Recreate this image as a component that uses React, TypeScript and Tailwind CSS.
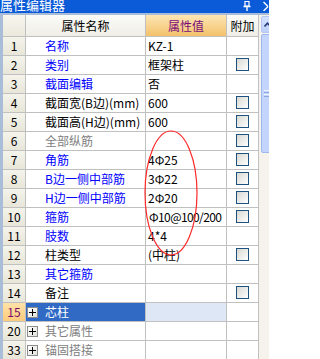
import React from "react";

type Row = { n: string; name: string; c: string; v: string; cb: boolean; tight?: boolean };

const rows: Row[] = [
  { n: "1", name: "名称", c: "text-[#0000ff]", v: "KZ-1", cb: false },
  { n: "2", name: "类别", c: "text-[#0000ff]", v: "框架柱", cb: true },
  { n: "3", name: "截面编辑", c: "text-[#0000ff]", v: "否", cb: false },
  { n: "4", name: "截面宽(B边)(mm)", c: "text-black", v: "600", cb: true },
  { n: "5", name: "截面高(H边)(mm)", c: "text-black", v: "600", cb: true },
  { n: "6", name: "全部纵筋", c: "text-[#808080]", v: "", cb: true },
  { n: "7", name: "角筋", c: "text-[#0000ff]", v: "4Φ25", cb: true },
  { n: "8", name: "B边一侧中部筋", c: "text-[#0000ff]", v: "3Φ22", cb: true },
  { n: "9", name: "H边一侧中部筋", c: "text-[#0000ff]", v: "2Φ20", cb: true },
  { n: "10", name: "箍筋", c: "text-[#0000ff]", v: "Φ10@100/200", cb: true, tight: true },
  { n: "11", name: "肢数", c: "text-[#0000ff]", v: "4*4", cb: false },
  { n: "12", name: "柱类型", c: "text-black", v: "(中柱)", cb: true },
  { n: "13", name: "其它箍筋", c: "text-[#0000ff]", v: "", cb: false },
  { n: "14", name: "备注", c: "text-black", v: "", cb: true },
];

function Checkbox() {
  return (
    <div className="w-[13px] h-[13px] border border-[#1c5180] bg-gradient-to-br from-[#d8d8d2] to-white mt-[2px]" />
  );
}

function PlusBox() {
  return (
    <div className="w-[11px] h-[11px] border border-[#8c8c8c] bg-gradient-to-br from-white to-[#e2e2dc] flex items-center justify-center shrink-0">
      <svg width="7" height="7" viewBox="0 0 7 7">
        <path d="M0 3.5H7M3.5 0V7" stroke="#000" strokeWidth="1" />
      </svg>
    </div>
  );
}

function NumCell({ n, active }: { n: string; active?: boolean }) {
  return (
    <div
      className={
        "w-[23px] h-full border-r border-[#c0c0c0] flex items-center justify-center " +
        (active
          ? "bg-gradient-to-b from-[#ffe2a8] to-[#fccb7c] text-[#7a0a6a]"
          : "bg-gradient-to-b from-[#f5f4ec] to-[#e8e6d8] text-black")
      }
    >
      {n}
    </div>
  );
}

export default function App() {
  return (
    <div className="relative w-[269px] h-[359px] overflow-hidden bg-white font-['Noto_Sans_CJK_SC',sans-serif] text-[12px] leading-[18px]">
      {/* title bar */}
      <div className="h-[13px] bg-[#0b5bd8] flex items-start overflow-hidden text-white">
        <span className="text-[13px] leading-[13px] -mt-[2px] ml-0">属性编辑器</span>
        <div className="flex-1" />
        <svg width="8" height="10" viewBox="0 0 8 10" className="mt-[1px] mr-[12px]">
          <path d="M2 0.5H6V5H2Z" fill="none" stroke="#fff" strokeWidth="1.2" />
          <path d="M0.5 5.5H7.5M4 5.5V10" stroke="#fff" strokeWidth="1.4" />
        </svg>
        <svg width="6" height="10" viewBox="0 0 6 10" className="mt-[1px]">
          <path d="M0.5 1L5 5.5M0.5 10L5 5.5" stroke="#fff" strokeWidth="1.4" fill="none" />
        </svg>
      </div>

      <div className="flex border-t-2 border-[#a9bcd8]">
        {/* grid */}
        <div className="w-[258px] shrink-0 border-l-[3px] border-[#a9bcd8]">
          {/* header */}
          <div className="flex h-[22px] border-b border-[#c0c0c0]">
            <div className="w-[23px] h-full border-r border-[#c0c0c0] bg-gradient-to-b from-[#f7f6ef] to-[#ebe9dc]" />
            <div className="w-[120px] h-full border-r border-[#c0c0c0] bg-gradient-to-b from-[#fbfbf8] to-[#efeee6] flex items-center justify-center text-black text-[12px]">
              属性名称
            </div>
            <div className="w-[81px] h-full border-r border-[#c0c0c0] bg-gradient-to-b from-[#fce6b4] to-[#f3c169] flex items-center justify-center text-[#7a0a7a]">
              属性值
            </div>
            <div className="w-[31px] h-full bg-gradient-to-b from-[#fbfbf8] to-[#efeee6] flex items-center justify-center text-black">
              附加
            </div>
          </div>

          {rows.map((r) => (
            <div key={r.n} className="flex h-[19px] border-b border-[#c0c0c0]">
              <NumCell n={r.n} />
              <div className={"w-[120px] h-full border-r border-[#c0c0c0] pl-[19px] whitespace-nowrap overflow-hidden " + r.c}>
                {r.name}
              </div>
              <div
                className={
                  "w-[81px] h-full border-r border-[#c0c0c0] whitespace-nowrap text-black overflow-hidden " +
                  (r.tight ? "pl-[3px] tracking-[-0.6px]" : "pl-[2px]")
                }
              >
                {r.v}
              </div>
              <div className="w-[31px] h-full flex justify-center">{r.cb ? <Checkbox /> : null}</div>
            </div>
          ))}

          {/* group rows */}
          <div className="flex h-[19px] border-b border-[#c0c0c0]">
            <NumCell n="15" active />
            <div className="w-[120px] h-full border-r border-[#c0c0c0] bg-[#316ac5] text-white flex items-center pl-[1px] gap-[7px]">
              <PlusBox />
              <span>芯柱</span>
            </div>
            <div className="w-[81px] h-full border-r border-[#c0c0c0] bg-[#dde7f5]" />
            <div className="w-[31px] h-full" />
          </div>
          <div className="flex h-[19px] border-b border-[#c0c0c0]">
            <NumCell n="20" />
            <div className="w-[120px] h-full border-r border-[#c0c0c0] text-[#808080] flex items-center pl-[1px] gap-[7px]">
              <PlusBox />
              <span>其它属性</span>
            </div>
            <div className="w-[81px] h-full border-r border-[#c0c0c0]" />
            <div className="w-[31px] h-full" />
          </div>
          <div className="flex h-[19px] border-b border-[#c0c0c0]">
            <NumCell n="33" />
            <div className="w-[120px] h-full border-r border-[#c0c0c0] text-[#808080] flex items-center pl-[1px] gap-[7px]">
              <PlusBox />
              <span>锚固搭接</span>
            </div>
            <div className="w-[81px] h-full border-r border-[#c0c0c0]" />
            <div className="w-[31px] h-full" />
          </div>
        </div>

        {/* scrollbar */}
        <div className="w-[17px] shrink-0 h-[344px] bg-[#f5f3ec] border-l border-[#c0c0c0] pl-[2px] flex flex-col">
          <div className="h-[17px] mt-[1px] rounded-[2px] bg-gradient-to-b from-[#d6e2fd] to-[#bccff8] border border-[#b4c6f2] flex items-center pl-[2px]">
            <svg width="7" height="5" viewBox="0 0 7 5">
              <path d="M0.5 4.5L3.5 1.2L6.5 4.5" stroke="#243a78" strokeWidth="1.6" fill="none" />
            </svg>
          </div>
          <div className="h-[119px] mt-[1px] rounded-[2px] bg-[#c3d4fd] border border-[#9fb6ee] flex flex-col justify-center pl-[2px] gap-[1px]">
            <div className="h-px w-[8px] bg-[#eef3ff]" />
            <div className="h-px w-[8px] bg-[#8ca6e0]" />
            <div className="h-px w-[8px] bg-[#eef3ff]" />
            <div className="h-px w-[8px] bg-[#8ca6e0]" />
          </div>
        </div>
      </div>

      {/* red annotation ellipse */}
      <svg className="absolute left-0 top-0 pointer-events-none" width="269" height="359" viewBox="0 0 269 359">
        <ellipse cx="171" cy="193" rx="26" ry="62" fill="none" stroke="#ff2a2a" strokeWidth="1.2" />
      </svg>
    </div>
  );
}
